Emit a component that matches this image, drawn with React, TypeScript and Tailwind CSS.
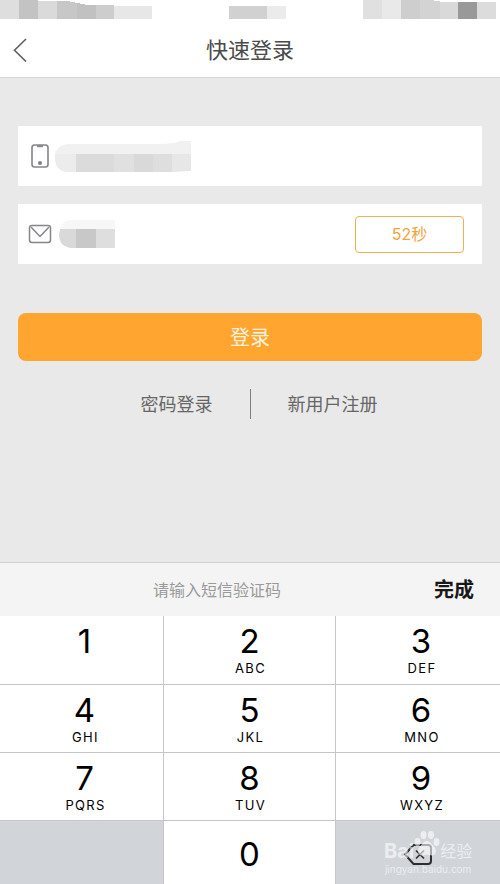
import { useState } from 'react'
import type { ReactNode } from 'react'

const KEYS = [
  { digit: '1', letters: '' },
  { digit: '2', letters: 'ABC' },
  { digit: '3', letters: 'DEF' },
  { digit: '4', letters: 'GHI' },
  { digit: '5', letters: 'JKL' },
  { digit: '6', letters: 'MNO' },
  { digit: '7', letters: 'PQRS' },
  { digit: '8', letters: 'TUV' },
  { digit: '9', letters: 'WXYZ' },
]

export default function App() {
  return (
    <div className="flex min-h-screen flex-col bg-[#e9e9e9] font-['Inter','Noto_Sans_CJK_SC',sans-serif]">
      <header className="border-b border-[#d4d4d4] bg-white">
        <StatusBar />
        <div className="grid h-[58px] grid-cols-[1fr_auto_1fr] items-center px-3 pt-1">
          <button type="button" aria-label="返回" className="w-6">
            <svg width="16" height="24" viewBox="0 0 16 24" fill="none" stroke="#5f5f5f" strokeWidth="1.6">
              <path d="M14 1 2.5 12.2 14 23.5" />
            </svg>
          </button>
          <h1 className="text-[22px] leading-8 text-[#4a4a4a]">快速登录</h1>
        </div>
      </header>

      <LoginForm />
      <Keypad />
    </div>
  )
}

function StatusBar() {
  return (
    <div className="flex h-[19px] justify-between pr-1">
      <svg width="152" height="19" viewBox="0 0 152 19" shapeRendering="crispEdges">
        <path fill="#dedede" d="M0 0h19v19H0z" />
        <path fill="#c3c3c3" d="M19 0h19v19H19z" />
        <path fill="#dadada" d="M38 1h19v18H38z" />
        <path fill="#c7c7c7" d="M57 1l11 0 9 2v16H57z" />
        <path fill="#c1c1c1" d="M77 3l10 2h9v14H77z" />
        <path fill="#cdcdcd" d="M96 5h18v14H96z" />
        <path fill="#e7e7e7" d="M114 6h38v13h-38z" />
      </svg>
      <svg width="57" height="19" viewBox="0 0 57 19" shapeRendering="crispEdges">
        <path fill="#d1d1d1" d="M0 6h38v13H0z" />
        <path fill="#ebebeb" d="M38 6h19v13H38z" />
      </svg>
      <svg width="133" height="19" viewBox="0 0 133 19" shapeRendering="crispEdges">
        <path fill="#e0e0e0" d="M0 0h19v19H0z" />
        <path fill="#e9e9e9" d="M19 0h19v19H19z" />
        <path fill="#cecece" d="M38 0h19v19H38z" />
        <path fill="#d3d3d3" d="M57 0h14v1h6v18H57z" />
        <path fill="#d9d9d9" d="M77 2h18v17H77z" />
        <path fill="#999999" d="M95 2h19v17H95z" />
        <path fill="#dcdcdc" d="M114 2h19v17h-19z" />
      </svg>
    </div>
  )
}

function LoginForm() {
  const [phone, setPhone] = useState('')
  const [code, setCode] = useState('')

  return (
    <form onSubmit={(e) => e.preventDefault()} className="px-[18px] pt-12 pb-12">
      <div className="flex flex-col gap-[18px]">
        <Field id="phone" label="手机号" value={phone} onChange={setPhone} icon={<PhoneIcon />} mask={<PhoneMask />} />
        <Field id="code" label="短信验证码" value={code} onChange={setCode} icon={<MailIcon />} mask={<CodeMask />}>
          <button
            type="button"
            className="h-[37px] w-[109px] shrink-0 rounded border border-[#f2ae55] text-base text-[#f2a33c]"
          >
            52秒
          </button>
        </Field>
      </div>

      <button type="submit" className="mt-[49px] h-12 w-full rounded-lg bg-[#ffa530] pt-0.5 text-xl text-[#fff3df]">
        登录
      </button>

      <div className="mt-[27px] grid grid-cols-[1fr_1px_1fr] items-center text-lg leading-[30px] text-[#666666]">
        <a href="#password" className="pt-0.5 pr-[37px] text-right">密码登录</a>
        <span className="h-[30px] bg-[#7c7c7c]" />
        <a href="#register" className="pt-0.5 pl-[37px]">新用户注册</a>
      </div>
    </form>
  )
}

type FieldProps = {
  id: string
  label: string
  value: string
  onChange: (value: string) => void
  icon: ReactNode
  mask: ReactNode
  children?: ReactNode
}

function Field({ id, label, value, onChange, icon, mask, children }: FieldProps) {
  return (
    <div className="flex h-[60px] items-center bg-white pr-[18px] pl-2.5">
      <label htmlFor={id} aria-label={label} className="flex shrink-0 items-center">
        {icon}
        {mask}
      </label>
      <input
        id={id}
        type="tel"
        value={value}
        onChange={(e) => onChange(e.target.value)}
        className="h-full min-w-0 flex-1 text-base outline-none"
      />
      {children}
    </div>
  )
}

function PhoneIcon() {
  return (
    <svg width="24" height="26" viewBox="0 0 24 26" fill="none" stroke="#85858a" strokeWidth="1.6">
      <rect x="4" y="2" width="16" height="22" rx="2.5" />
      <path d="M9 3.2h6" strokeWidth="2" />
      <circle cx="12" cy="20" r="1.3" fill="#77777c" />
    </svg>
  )
}

function MailIcon() {
  return (
    <svg width="24" height="26" viewBox="0 0 24 26" fill="none" stroke="#85858a" strokeWidth="1.5">
      <rect x="1.5" y="4.5" width="21" height="17" rx="2.5" />
      <path d="M3.2 6.2 12 15.5l8.8-9.3" />
    </svg>
  )
}

// pixelated phone number
function PhoneMask() {
  return (
    <svg width="140" height="32" viewBox="0 0 140 32" className="ml-[2px]">
      <path fill="#f1f1f1" d="M15 4H107L121 3 126 1H137V14H1Q4 4 15 4z" />
      <path fill="#ececec" d="M1 14H22V32H14Q2 32 1 19z" />
      <path fill="#dbdbdb" d="M22 14h38v18H22z" />
      <path fill="#e0e0e0" d="M60 14h20v18H60z" />
      <path fill="#d9d9d9" d="M80 14h19v18H80z" />
      <path fill="#dedede" d="M99 14h19v18H99z" />
      <path fill="#e7e7e7" d="M118 14h19v17l-19 1z" />
    </svg>
  )
}

// pixelated sms code
function CodeMask() {
  return (
    <svg width="60" height="30" viewBox="0 0 60 30" className="ml-[6px]">
      <path fill="#f7f7f7" d="M13 1H57V10H2Q5 1 13 1z" />
      <path fill="#d9d9d9" d="M2 10H18V29H12Q1 27 1 16z" />
      <path fill="#c8c8c8" d="M18 10h20v19H18z" />
      <path fill="#dedede" d="M38 10h19v19H38z" />
    </svg>
  )
}

function Keypad() {
  return (
    <section className="mt-auto border-t border-[#cfcfcf] bg-[#f4f4f4]">
      <div className="flex h-[53px] items-center pr-[26px]">
        <p className="flex-1 text-center text-base text-[#9a9a9a]">请输入短信验证码</p>
        <button type="button" className="text-xl font-bold text-[#181818]">完成</button>
      </div>

      <div className="grid grid-cols-[164fr_172fr_164fr] grid-rows-[69px_68px_68px_63px]">
        {KEYS.map((key, i) => (
          <button
            key={key.digit}
            type="button"
            className={`flex flex-col items-center justify-start border-b border-[#c6c6c6] bg-white pt-1 text-black ${
              i % 3 === 1 ? '' : 'pl-1.5'
            } ${i % 3 === 2 ? '' : 'border-r'}`}
          >
            <span className="text-[33px] leading-[42px]">{key.digit}</span>
            <span className="pl-0.5 text-[13px] leading-3 tracking-widest">{key.letters}</span>
          </button>
        ))}
        <div className="border-r border-[#c6c6c6] bg-[#d1d5da]" />
        <button type="button" className="flex items-start justify-center border-r border-[#c6c6c6] bg-white pt-3">
          <span className="text-[33px] leading-[42px]">0</span>
        </button>
        <button type="button" aria-label="删除" className="relative flex justify-center bg-[#d1d5da] pt-[22px]">
          <svg width="30" height="24" viewBox="0 0 30 24" fill="none" stroke="#2b2d30" strokeWidth="2">
            <path d="M10.5 2H25q3 0 3 3v13q0 3-3 3H10.5L2 11.5z" />
            <path d="M13 7.5l8 8m0-8l-8 8" strokeWidth="1.6" />
          </svg>
          <Watermark />
        </button>
      </div>
    </section>
  )
}

function Watermark() {
  return (
    <span className="absolute top-2 left-12 flex flex-col text-white/60">
      <span className="flex items-start">
        <span className="pt-2.5 text-xl leading-6 font-bold">Bai</span>
        <svg width="26" height="30" viewBox="0 0 26 30" fill="currentColor">
          <ellipse cx="3.5" cy="13" rx="3" ry="4" />
          <ellipse cx="9.5" cy="6" rx="3" ry="4" />
          <ellipse cx="17" cy="6" rx="3" ry="4" />
          <ellipse cx="22.5" cy="13" rx="3" ry="4" />
          <path d="M13 12c3 0 4.500 3 7 5.500 3 3 2.500 9-2 9-2 0-3-.7-5-.7s-3 .7-5 .7c-4.500 0-5-6-2-9 2.500-2.500 4-5.500 7-5.500z" />
        </svg>
        <span className="pt-2.5 text-base leading-6">经验</span>
      </span>
      <span className="text-[10px] leading-3">jingyan.baidu.com</span>
    </span>
  )
}
